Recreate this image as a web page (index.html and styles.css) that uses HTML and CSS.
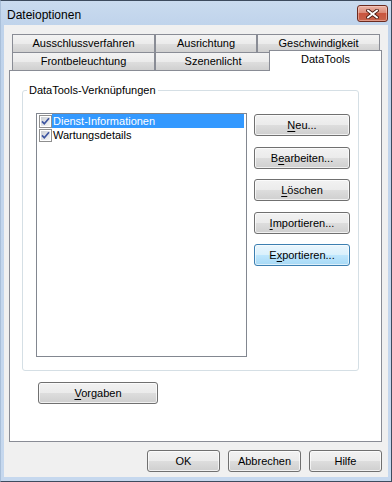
FILE: index.html
```html
<!DOCTYPE html>
<html lang="de">
<head>
    <meta charset="UTF-8">
    <title>Dateioptionen</title>
    <link rel="stylesheet" href="styles.css">
</head>
<body>

    <div class="window">
        <!-- Titelleiste -->
        <div class="titlebar">
            <span class="title">Dateioptionen</span>
            <button class="close" type="button">
                <svg width="13" height="10" viewBox="0 0 13 10">
                    <path d="M2 1.5 L11 8.5 M11 1.5 L2 8.5" stroke="#4a1a12" stroke-width="3.6" stroke-linecap="square" fill="none"/>
                    <path d="M2 1.5 L11 8.5 M11 1.5 L2 8.5" stroke="#fff" stroke-width="1.8" stroke-linecap="square" fill="none"/>
                </svg>
            </button>
        </div>

        <div class="client">
            <!-- Registerkarten -->
            <div class="tabstrip">
                <div class="tab-row">
                    <div class="tab tab-ausschluss">Ausschlussverfahren</div>
                    <div class="tab tab-ausrichtung">Ausrichtung</div>
                    <div class="tab tab-geschw">Geschwindigkeit</div>
                </div>
                <div class="tab-row">
                    <div class="tab tab-front">Frontbeleuchtung</div>
                    <div class="tab tab-szene">Szenenlicht</div>
                    <div class="tab tab-active">DataTools</div>
                </div>
            </div>

            <div class="panel">
                <div class="group">
                    <div class="group-label">DataTools-Verknüpfungen</div>
                    <div class="group-body">
                        <div class="listbox">
                            <div class="item selected">
                                <svg class="check" width="13" height="13" viewBox="0 0 13 13">
                                    <defs>
                                        <linearGradient id="cbFill" x1="0" y1="0" x2="1" y2="1">
                                            <stop offset="0" stop-color="#cbcfd5"/>
                                            <stop offset="1" stop-color="#f7f7f7"/>
                                        </linearGradient>
                                    </defs>
                                    <rect x="0.5" y="0.5" width="12" height="12" fill="#fff" stroke="#8f8f8f"/>
                                    <rect x="2" y="2" width="9" height="9" fill="url(#cbFill)"/>
                                    <path d="M3 6.3 L5.3 8.8 L10 3.2" stroke="#3d55a0" stroke-width="1.7" fill="none"/>
                                </svg>
                                <span class="item-label">Dienst-Informationen</span>
                            </div>
                            <div class="item">
                                <svg class="check" width="13" height="13" viewBox="0 0 13 13">
                                    <rect x="0.5" y="0.5" width="12" height="12" fill="#fff" stroke="#8f8f8f"/>
                                    <rect x="2" y="2" width="9" height="9" fill="url(#cbFill)"/>
                                    <path d="M3 6.3 L5.3 8.8 L10 3.2" stroke="#3d55a0" stroke-width="1.7" fill="none"/>
                                </svg>
                                <span class="item-label">Wartungsdetails</span>
                            </div>
                        </div>

                        <div class="side-buttons">
                            <button class="btn btn-side" type="button"><u>N</u>eu...</button>
                            <button class="btn btn-side" type="button">B<u>e</u>arbeiten...</button>
                            <button class="btn btn-side" type="button"><u>L</u>öschen</button>
                            <button class="btn btn-side" type="button"><u>I</u>mportieren...</button>
                            <button class="btn btn-side btn-default" type="button">E<u>x</u>portieren...</button>
                        </div>
                    </div>
                </div>

                <button class="btn btn-vorgaben" type="button"><u>V</u>orgaben</button>
            </div>

            <!-- Dialogschaltflächen -->
            <div class="dialog-buttons">
                <button class="btn btn-dialog" type="button">OK</button>
                <button class="btn btn-dialog" type="button">Abbrechen</button>
                <button class="btn btn-dialog" type="button">Hilfe</button>
            </div>
        </div>
    </div>

</body>
</html>
```

FILE: styles.css
```css
* {
    margin: 0;
    padding: 0;
    box-sizing: border-box;
}

body {
    width: 392px;
    height: 482px;
    overflow: hidden;
    font-family: "Liberation Sans", Arial, sans-serif;
    font-size: 11px;
    color: #000;
}

.window {
    width: 392px;
    height: 482px;
    display: flex;
    flex-direction: column;
    background: linear-gradient(#cadbef, #bfd3eb 25px, #c6d8ee);
    border: 1px solid #3d4b5e;
    border-left-color: #a9bfd9;
    padding: 0 3px 4px;
}

.titlebar {
    height: 24px;
    display: flex;
    justify-content: space-between;
    align-items: flex-start;
    padding: 0 0 0 3px;
}

.title {
    font-size: 12px;
    padding-top: 7px;
    color: #000;
}

.close {
    width: 31px;
    height: 17px;
    margin-top: 4px;
    border: 1px solid #6b2a1f;
    border-radius: 3px;
    background: linear-gradient(#eab3a6, #db8a77 45%, #c9553e 50%, #c8644c);
    box-shadow: inset 0 0 0 1px rgba(255, 220, 210, 0.45);
    display: flex;
    align-items: center;
    justify-content: center;
}

.client {
    flex: 1;
    background: #f0f0f0;
    display: flex;
    flex-direction: column;
    padding: 9px 6px 0 5px;
}

.tabstrip {
    padding-left: 3px;
}

.tab-row {
    display: flex;
    height: 18px;
    align-items: flex-start;
}

.tab {
    flex: none;
    height: 18px;
    border: 1px solid #898c95;
    border-bottom: none;
    background: linear-gradient(#f3f3f3, #ebebeb 50%, #dedede 51%, #d0d0d0);
    text-align: center;
    line-height: 17px;
}

.tab-ausschluss,
.tab-front {
    width: 143px;
}

.tab-ausrichtung {
    width: 102px;
}

.tab-geschw {
    width: 123px;
}

.tab-szene {
    width: 116px;
}

.tab-active {
    position: relative;
    z-index: 1;
    width: 113px;
    height: 21px;
    margin: -2px 0 0 -2px;
    background: #fff;
    line-height: 16px;
}

.panel {
    width: 373px;
    height: 372px;
    border: 1px solid #898c95;
    background: #fff;
    padding: 19px 0 0 12px;
}

.group {
    width: 337px;
    border: 1px solid #d5dfe5;
    border-radius: 3px;
}

.group-label {
    width: fit-content;
    margin: -7px 0 0 4px;
    padding: 0 2px;
    background: #fff;
    line-height: 13px;
}

.group-body {
    display: flex;
    align-items: flex-start;
    gap: 7px;
    padding: 16px 8px 13px 13px;
}

.listbox {
    flex: none;
    width: 211px;
    height: 244px;
    border: 1px solid #828790;
    background: #fff;
    padding: 0 2px 0 0;
}

.item {
    display: flex;
    height: 14px;
    padding-left: 2px;
}

.check {
    flex: none;
    margin-top: 1px;
}

.item-label {
    flex: 1;
    padding-left: 1px;
    line-height: 14px;
}

.selected .item-label {
    background: #3399ff;
    color: #fff;
}

.side-buttons {
    display: flex;
    flex-direction: column;
    gap: 10.5px;
    margin-top: 1px;
}

.btn {
    height: 22px;
    border: 1px solid #707070;
    border-radius: 3px;
    background: linear-gradient(#f2f2f2, #ebebeb 50%, #dddddd 51%, #cfcfcf);
    box-shadow: inset 0 0 0 1px rgba(255, 255, 255, 0.7);
    font-family: inherit;
    font-size: 11px;
    color: #000;
    text-align: center;
}

.btn u {
    text-decoration-thickness: 1px;
    text-underline-offset: 2px;
}

.btn-side {
    flex: none;
    width: 96px;
}

.btn-default {
    border-color: #3c7fb1;
    background: linear-gradient(#eaf6fd, #d9f0fc 50%, #bee6fd 51%, #a7d9f5);
    box-shadow: inset 0 0 0 1px rgba(255, 255, 255, 0.6);
}

.btn-vorgaben {
    display: block;
    width: 120px;
    margin: 11px 0 0 16px;
}

.dialog-buttons {
    display: flex;
    justify-content: flex-end;
    gap: 8px;
    margin-top: 8px;
}

.btn-dialog {
    width: 73px;
}
```
